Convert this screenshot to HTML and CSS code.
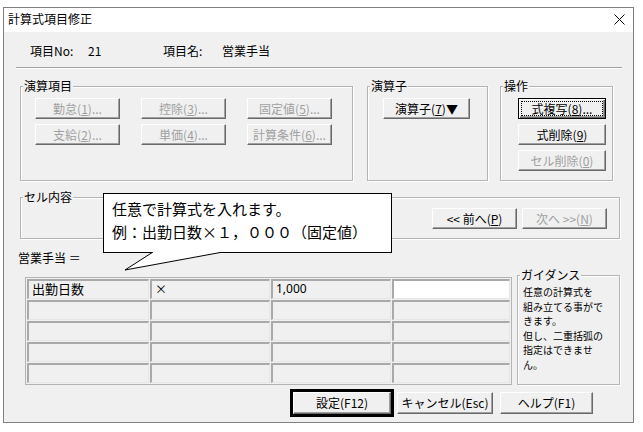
FILE: index.html
```html
<!DOCTYPE html>
<html lang="ja">
<head>
    <meta charset="UTF-8">
    <title>計算式項目修正</title>
    <link rel="stylesheet" href="styles.css">
</head>
<body>

<div class="window">
    <div class="titlebar">
        <span class="title">計算式項目修正</span>
        <svg class="close" width="11" height="11" viewBox="0 0 11 11">
            <path d="M0.5 0.5L10.5 10.5M10.5 0.5L0.5 10.5" stroke="#000" stroke-width="1" fill="none"/>
        </svg>
    </div>

    <div class="dialog">
        <div class="item-info">
            <span class="info-label">項目No:</span>
            <span class="info-no">21</span>
            <span class="info-label2">項目名:</span>
            <span>営業手当</span>
        </div>
        <div class="separator"></div>

        <div class="top-groups">
            <fieldset class="group group-items">
                <legend>演算項目</legend>
                <div class="item-buttons">
                    <button class="btn" disabled>勤怠(<u>1</u>)...</button>
                    <button class="btn" disabled>控除(<u>3</u>)...</button>
                    <button class="btn" disabled>固定値(<u>5</u>)...</button>
                    <button class="btn" disabled>支給(<u>2</u>)...</button>
                    <button class="btn" disabled>単価(<u>4</u>)...</button>
                    <button class="btn" disabled>計算条件(<u>6</u>)...</button>
                </div>
            </fieldset>
            <fieldset class="group group-ops">
                <legend>演算子</legend>
                <div class="ops-body">
                    <button class="btn btn-ops">演算子(<u>7</u>)▼</button>
                </div>
            </fieldset>
            <fieldset class="group group-actions">
                <legend>操作</legend>
                <div class="actions-body">
                    <button class="btn btn-default">式複写(<u>8</u>)...</button>
                    <button class="btn">式削除(<u>9</u>)</button>
                    <button class="btn" disabled>セル削除(<u>0</u>)</button>
                </div>
            </fieldset>
        </div>

        <fieldset class="group group-cell">
            <legend>セル内容</legend>
            <div class="cell-body">
                <button class="btn btn-nav">&lt;&lt; 前へ(<u>P</u>)</button>
                <button class="btn btn-nav" disabled>次へ &gt;&gt;(<u>N</u>)</button>
            </div>
        </fieldset>

        <div class="formula-label">営業手当 ＝</div>

        <div class="formula-row">
            <div class="formula-grid">
                <div class="cell cell-name">出勤日数</div>
                <div class="cell">×</div>
                <div class="cell cell-num">1,000</div>
                <div class="cell cell-edit"></div>
                <div class="cell"></div><div class="cell"></div><div class="cell"></div><div class="cell"></div>
                <div class="cell"></div><div class="cell"></div><div class="cell"></div><div class="cell"></div>
                <div class="cell"></div><div class="cell"></div><div class="cell"></div><div class="cell"></div>
                <div class="cell"></div><div class="cell"></div><div class="cell"></div><div class="cell"></div>
            </div>
            <fieldset class="group group-guide">
                <legend>ガイダンス</legend>
                <div class="guide-text">任意の計算式を<br>組み立てる事がで<br>きます。<br>但し、二重括弧の<br>指定はできませ<br>ん。</div>
            </fieldset>
        </div>

        <div class="footer">
            <div class="default-frame">
                <button class="btn btn-ok">設定(F12)</button>
            </div>
            <button class="btn btn-cancel">キャンセル(Esc)</button>
            <button class="btn btn-help">ヘルプ(F1)</button>
        </div>
    </div>

    <!-- callout over the dialog -->
    <div class="balloon">
        <p>任意で計算式を入れます。</p>
        <p>例：出勤日数×１，０００（固定値）</p>
        <svg class="balloon-tail" width="100" height="20" viewBox="0 0 100 20">
            <polygon points="28,0 98,0 0,18" fill="#fff"/>
            <polyline points="28,0 0,18 98,0" fill="none" stroke="#000" stroke-width="1"/>
        </svg>
    </div>
</div>

</body>
</html>
```

FILE: styles.css
```css
* {
    box-sizing: border-box;
}
body {
    margin: 0;
    background: #ffffff;
    font-family: "Noto Sans CJK JP", sans-serif;
    font-size: 12px;
    line-height: 16px;
    color: #000000;
}
.window {
    position: relative;
    width: 631px;
    height: 416px;
    margin: 7px 0 0 3px;
    border: 1px solid #808080;
    background: #f0f0f0;
    display: flex;
    flex-direction: column;
}
.titlebar {
    height: 24px;
    background: #ffffff;
    display: flex;
    align-items: center;
    justify-content: space-between;
    padding: 0 8px 2px 4px;
}
.dialog {
    flex: 1;
    padding: 11px 13px 0 16px;
}
.item-info {
    display: flex;
    height: 16px;
    padding-left: 10px;
}
.info-label {
    width: 58px;
}
.info-no {
    width: 75px;
}
.info-label2 {
    width: 59px;
}
.separator {
    margin: 8px -2px 0 -4px;
    border-top: 1px solid #a0a0a0;
    border-bottom: 1px solid #ffffff;
}

/* group boxes */
.group {
    margin: 0;
    padding: 0;
    min-width: 0;
    border: 1px solid #b4b4b4;
    box-shadow: inset 1px 1px 0 #ffffff, 1px 1px 0 #ffffff;
}
.group legend {
    margin-left: 2px;
    padding: 0 1px;
    line-height: 16px;
    background: #f0f0f0;
}
.top-groups {
    display: flex;
    margin-top: 9px;
}
.group-items {
    width: 333px;
}
.item-buttons {
    display: grid;
    grid-template-columns: repeat(3, 85px);
    column-gap: 21px;
    row-gap: 5px;
    padding: 4px 0 0 14px;
}
.group-ops {
    width: 121px;
    margin-left: 14px;
}
.ops-body {
    padding: 4px 0 0 15px;
}
.btn-ops {
    width: 87px;
}
.group-actions {
    width: 113px;
    margin-left: 12px;
}
.actions-body {
    display: flex;
    flex-direction: column;
    gap: 5px;
    padding: 4px 0 9px 17px;
}
.actions-body .btn {
    width: 88px;
}

/* buttons */
.btn {
    height: 21px;
    padding: 0;
    font: inherit;
    color: #000000;
    background: #f0f0f0;
    border: 1px solid;
    border-color: #ffffff #696969 #696969 #ffffff;
    box-shadow: inset -1px -1px 0 #a0a0a0;
    display: flex;
    align-items: center;
    justify-content: center;
    white-space: nowrap;
}
.btn:disabled {
    color: #a0a0a0;
}
.btn-default {
    border-color: #000000;
    box-shadow: inset 1px 1px 0 #ffffff, inset -1px -1px 0 #696969, inset -2px -2px 0 #a0a0a0;
    outline: 1px dotted #000000;
    outline-offset: -4px;
}

.group-cell {
    margin-top: 8px;
}
.cell-body {
    display: flex;
    justify-content: flex-end;
    gap: 5px;
    padding: 3px 12px 9px 0;
}
.btn-nav {
    width: 85px;
}

.formula-label {
    margin: 11px 0 0 -2px;
}
.formula-row {
    display: flex;
    align-items: flex-start;
    margin-top: 1px;
}
.formula-grid {
    width: 487px;
    margin: 10px 0 0 5px;
    display: grid;
    grid-template-columns: 122px 120px 120px 1fr;
    grid-template-rows: repeat(5, 20px);
    gap: 1px;
    padding: 1px;
    border: 1px solid #b4b4b4;
}
.cell {
    background: #f0f0f0;
    border-top: 2px solid #a9a9a9;
    border-left: 2px solid #a9a9a9;
    border-right: 1px solid #e6e6e6;
    border-bottom: 1px solid #e6e6e6;
    padding-left: 3px;
    line-height: 16px;
}
.cell-name {
    font-size: 13px;
}
.cell-num {
    font-family: "Noto Sans", sans-serif;
    font-size: 12px;
}
.cell-edit {
    background: #ffffff;
}
.group-guide {
    width: 103px;
    height: 118px;
    margin-left: 5px;
}
.guide-text {
    padding: 2px 0 0 5px;
    font-size: 10px;
    line-height: 14.5px;
    white-space: nowrap;
}

.footer {
    display: flex;
    align-items: center;
    margin-top: 4px;
    padding-left: 270px;
}
.default-frame {
    border: 3px solid #000000;
}
.btn-ok {
    width: 98px;
    height: 22px;
}
.btn-cancel {
    width: 96px;
    height: 22px;
    margin-left: 3px;
}
.btn-help {
    width: 93px;
    height: 22px;
    margin-left: 7px;
}

/* callout */
.balloon {
    position: absolute;
    left: 99px;
    top: 185px;
    width: 289px;
    height: 60px;
    padding: 3px 0 0 8px;
    background: #ffffff;
    border: 1px solid #000000;
    font-size: 15px;
    line-height: 23px;
}
.balloon p {
    margin: 0;
}
.balloon-tail {
    position: absolute;
    left: 21px;
    top: 100%;
}
```
